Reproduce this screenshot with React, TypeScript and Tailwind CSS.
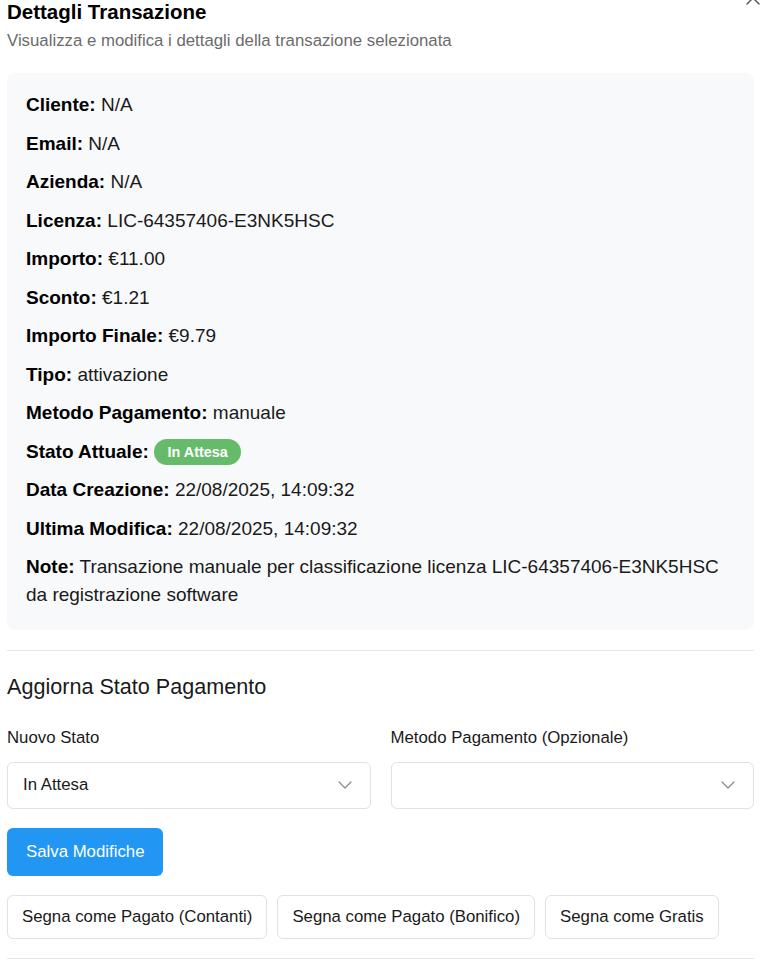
import { X, ChevronDown } from "lucide-react";

const rows: { label: string; value: string }[] = [
  { label: "Cliente:", value: "N/A" },
  { label: "Email:", value: "N/A" },
  { label: "Azienda:", value: "N/A" },
  { label: "Licenza:", value: "LIC-64357406-E3NK5HSC" },
  { label: "Importo:", value: "€11.00" },
  { label: "Sconto:", value: "€1.21" },
  { label: "Importo Finale:", value: "€9.79" },
  { label: "Tipo:", value: "attivazione" },
  { label: "Metodo Pagamento:", value: "manuale" },
];

const rowsAfter: { label: string; value: string }[] = [
  { label: "Data Creazione:", value: "22/08/2025, 14:09:32" },
  { label: "Ultima Modifica:", value: "22/08/2025, 14:09:32" },
  {
    label: "Note:",
    value: "Transazione manuale per classificazione licenza LIC-64357406-E3NK5HSC da registrazione software",
  },
];

function Row({ label, value }: { label: string; value: string }) {
  return (
    <p className="mb-[10.5px] text-[19px] leading-[28px] text-[#1a1a1a]">
      <strong className="font-bold text-black">{label}</strong> {value}
    </p>
  );
}

function SelectBox({ value }: { value?: string }) {
  return (
    <div className="flex h-[47px] items-center justify-between rounded-md border border-[#e2e2e2] bg-white pl-[15px] pr-[13px] text-[16.8px] text-[#1a1a1a]">
      <span>{value ?? ""}</span>
      <ChevronDown className="h-6 w-6 text-[#8a8a8a]" strokeWidth={1.2} />
    </div>
  );
}

export default function App() {
  return (
    <div
      className="min-h-screen bg-white pl-[7px] pr-[18px] text-[#1a1a1a]"
      style={{ fontFamily: '"Liberation Sans", Arial, sans-serif' }}
    >
      {/* Header */}
      <div className="relative">
        <button className="absolute right-[-11px] top-[-14px] text-[#555]">
          <X className="h-6 w-6" strokeWidth={1.4} />
        </button>
        <h2 className="text-[20.5px] font-bold leading-[24px] text-black">Dettagli Transazione</h2>
        <p className="mt-[6px] text-[16.8px] leading-[22px] text-[#6b6b6b]">
          Visualizza e modifica i dettagli della transazione selezionata
        </p>
      </div>

      {/* Details card */}
      <div className="mt-[21px] rounded-lg bg-[#f8f9fa] px-[19px] pb-[10px] pt-[18px]">
        {rows.map((r) => (
          <Row key={r.label} {...r} />
        ))}
        <p className="mb-[10.5px] text-[19px] leading-[28px]">
          <strong className="font-bold text-black">Stato Attuale:</strong>{" "}
          <span className="inline-block rounded-full bg-[#66bb6a] px-[13.5px] align-[1px] text-[14.4px] font-bold leading-[26px] text-white">
            In Attesa
          </span>
        </p>
        {rowsAfter.map((r) => (
          <Row key={r.label} {...r} />
        ))}
      </div>

      <div className="mt-[20px] h-px bg-[#e6e6e6]" />

      {/* Update form */}
      <h3 className="mt-[23px] text-[21.6px] leading-[26px] text-[#1a1a1a]">Aggiorna Stato Pagamento</h3>

      <div className="mt-[28px] grid grid-cols-2 gap-[20px]">
        <div>
          <label className="block text-[16.8px] leading-[20px]">Nuovo Stato</label>
          <div className="mt-[14px]">
            <SelectBox value="In Attesa" />
          </div>
        </div>
        <div>
          <label className="block text-[16.8px] leading-[20px]">Metodo Pagamento (Opzionale)</label>
          <div className="mt-[14px]">
            <SelectBox />
          </div>
        </div>
      </div>

      <button className="mt-[19px] h-[48px] rounded-md bg-[#2196f3] px-[19px] text-[16.8px] text-white">
        Salva Modifiche
      </button>

      <div className="mt-[19px] flex gap-[10px]">
        {["Segna come Pagato (Contanti)", "Segna come Pagato (Bonifico)", "Segna come Gratis"].map((t) => (
          <button
            key={t}
            className="h-[44px] rounded-md border border-[#e2e2e2] bg-white px-[14px] text-[16.8px] text-[#1a1a1a]"
          >
            {t}
          </button>
        ))}
      </div>

      <div className="mt-[19px] h-px bg-[#e6e6e6]" />
    </div>
  );
}
